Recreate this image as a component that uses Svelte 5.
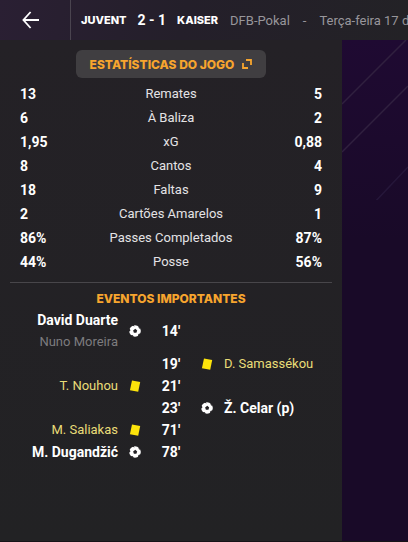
<!--
  Match overview: score bar on top, then the stats table and the
  list of key events in a side panel over the club backdrop.
-->
<script lang="ts">
  type Stat = { label: string; home: string; away: string };
  type MatchEvent = {
    minute: number;
    side: 'home' | 'away';
    kind: 'goal' | 'yellow';
    player: string;
    assist?: string;
  };

  const stats: Stat[] = [
    { label: 'Remates', home: '13', away: '5' },
    { label: 'À Baliza', home: '6', away: '2' },
    { label: 'xG', home: '1,95', away: '0,88' },
    { label: 'Cantos', home: '8', away: '4' },
    { label: 'Faltas', home: '18', away: '9' },
    { label: 'Cartões Amarelos', home: '2', away: '1' },
    { label: 'Passes Completados', home: '86%', away: '87%' },
    { label: 'Posse', home: '44%', away: '56%' }
  ];

  const events: MatchEvent[] = [
    { minute: 14, side: 'home', kind: 'goal', player: 'David Duarte', assist: 'Nuno Moreira' },
    { minute: 19, side: 'away', kind: 'yellow', player: 'D. Samassékou' },
    { minute: 21, side: 'home', kind: 'yellow', player: 'T. Nouhou' },
    { minute: 23, side: 'away', kind: 'goal', player: 'Ž. Celar (p)' },
    { minute: 71, side: 'home', kind: 'yellow', player: 'M. Saliakas' },
    { minute: 78, side: 'home', kind: 'goal', player: 'M. Dugandžić' }
  ];
</script>

{#snippet icon(kind: MatchEvent['kind'])}
  {#if kind === 'goal'}
    <svg viewBox="0 0 12 12" width="12" height="12" aria-hidden="true">
      <circle cx="6" cy="6" r="5.8" fill="#fff" />
      <path
        d="M6.3 3.8 8.2 5.4 7.4 7.8H4.9L4.1 5.4ZM2.6.2 5.6 1.5 4.4-.4ZM9.6.6 9.7 3 12 4.6ZM12 8.2 9.4 9 8.8 12ZM4.6 12.2 4 10.2 1.2 10ZM-.2 7 1.5 5.2.2 3Z"
        fill="#232124"
      />
    </svg>
  {:else}
    <svg viewBox="0 0 12 12" width="12" height="12" aria-hidden="true">
      <path d="M3 .4 11.2 1.9 9.2 11.8.9 10.2Z" fill="#fde40b" />
    </svg>
  {/if}
{/snippet}

{#snippet names(e: MatchEvent)}
  <span class="names {e.side} {e.kind}">
    <span>{e.player}</span>
    {#if e.assist}
      <span class="assist">{e.assist}</span>
    {/if}
  </span>
{/snippet}

<div class="screen">
  <header>
    <button type="button" class="back" aria-label="Voltar">
      <svg viewBox="0 0 18 18" width="18" height="18" aria-hidden="true">
        <path d="M17 9H1.6M8.6 1 1.4 9l7.2 8" fill="none" stroke="#fff" stroke-width="1.8" />
      </svg>
    </button>
    <div class="score">
      <span class="team">JUVENT</span>
      <span class="goals">2 - 1</span>
      <span class="team">KAISER</span>
    </div>
    <div class="info">
      <span>DFB-Pokal</span>
      <span>-</span>
      <span>Terça-feira 17 d</span>
    </div>
  </header>

  <main>
    <div class="panel">
      <button type="button" class="title">
        ESTATÍSTICAS DO JOGO
        <svg viewBox="0 0 10 10" width="10" height="10" aria-hidden="true">
          <path d="M4 1H9V6M1 4V9H6" fill="none" stroke="#f7a52e" stroke-width="1.8" />
        </svg>
      </button>

      <table>
        <tbody>
          {#each stats as s (s.label)}
            <tr>
              <td>{s.home}</td>
              <th scope="row">{s.label}</th>
              <td class="right">{s.away}</td>
            </tr>
          {/each}
        </tbody>
      </table>

      <section>
        <h2>EVENTOS IMPORTANTES</h2>
        <ol>
          {#each events as e (e.minute)}
            <li>
              {#if e.side === 'home'}
                {@render names(e)}
                {@render icon(e.kind)}
              {:else}
                <span></span>
                <span></span>
              {/if}
              <span class="minute">{e.minute}'</span>
              {#if e.side === 'away'}
                {@render icon(e.kind)}
                {@render names(e)}
              {/if}
            </li>
          {/each}
        </ol>
      </section>
    </div>

    <div class="backdrop">
      <svg viewBox="0 0 66 160" width="66" height="160" aria-hidden="true">
        <path d="M0 64 64 0M0 112 66 46" stroke="#30203f" stroke-width="1.5" />
        <path d="M30 165 66 127" stroke="#26173a" stroke-width="1.5" />
      </svg>
    </div>
  </main>
</div>

<style>
  :global(body) {
    margin: 0;
    background: #190a28;
  }
  .screen {
    display: flex;
    flex-direction: column;
    min-height: 100vh;
    box-sizing: border-box;
    border-bottom: 1px solid #171318;
    color: #fff;
    font-family: Roboto, 'Liberation Sans', sans-serif;
    font-size: 13px;
    overflow: hidden;
  }
  button {
    border: none;
    background: none;
    padding: 0;
    font: inherit;
    cursor: pointer;
  }

  header {
    display: flex;
    align-items: center;
    height: 40px;
    background: linear-gradient(100deg, #2a1f33, #241f2a 45%, #232226);
    white-space: nowrap;
    overflow: hidden;
  }
  .back {
    display: flex;
    align-items: center;
    justify-content: center;
    flex: none;
    width: 71px;
    height: 40px;
    box-sizing: border-box;
    padding-right: 8px;
    border-right: 1px solid #4a444f;
  }
  .score {
    display: flex;
    align-items: center;
    gap: 11px;
    margin: 0 12px 0 10px;
  }
  .team,
  .title,
  h2 {
    font-family: Inter, 'Liberation Sans', sans-serif;
    font-size: 12px;
    font-weight: 800;
  }
  .team {
    font-size: 11px;
  }
  .goals {
    font-size: 14px;
    font-weight: 700;
  }
  .info {
    display: flex;
    gap: 13px;
    color: #98969b;
  }

  main {
    display: grid;
    grid-template-columns: 1fr 66px;
    flex: 1;
  }
  .panel {
    display: flex;
    flex-direction: column;
    padding: 10px;
    background: linear-gradient(#242126, #222224);
  }
  .title {
    display: flex;
    align-items: center;
    align-self: center;
    gap: 8px;
    height: 28px;
    padding: 0 14px;
    border-radius: 6px;
    background: #403e41;
    color: #f7a52e;
  }

  table {
    margin: 4px 0 8px;
    border-collapse: collapse;
    table-layout: fixed;
  }
  td,
  th {
    height: 24px;
    padding: 0 10px;
    line-height: 24px;
  }
  td {
    width: 60px;
    font-size: 14px;
    font-weight: 700;
  }
  th {
    padding: 0;
    color: #e4e3e5;
    font-weight: 400;
    text-align: center;
  }
  .right {
    text-align: right;
  }

  section {
    border-top: 1px solid #48464a;
  }
  h2 {
    margin: 6px 0 0;
    color: #f7a52e;
    line-height: 20px;
    text-align: center;
  }
  ol {
    margin: 0;
    padding: 0;
    list-style: none;
  }
  li {
    display: grid;
    grid-template-columns: 1fr 34px 38px 34px 1fr;
    align-items: center;
    line-height: 22px;
  }
  li svg {
    justify-self: center;
  }
  .names {
    display: flex;
    flex-direction: column;
    white-space: nowrap;
  }
  .home {
    text-align: right;
  }
  .goal {
    font-size: 14px;
    font-weight: 700;
  }
  .yellow {
    color: #e9dd78;
  }
  .assist {
    color: #7d7c7f;
    font-size: 13px;
    font-weight: 400;
  }
  .minute {
    font-size: 14px;
    font-weight: 700;
    text-align: center;
  }

  .backdrop {
    background: linear-gradient(#1f0a32, #190a28 40%);
  }
  .backdrop svg {
    display: block;
  }
</style>
